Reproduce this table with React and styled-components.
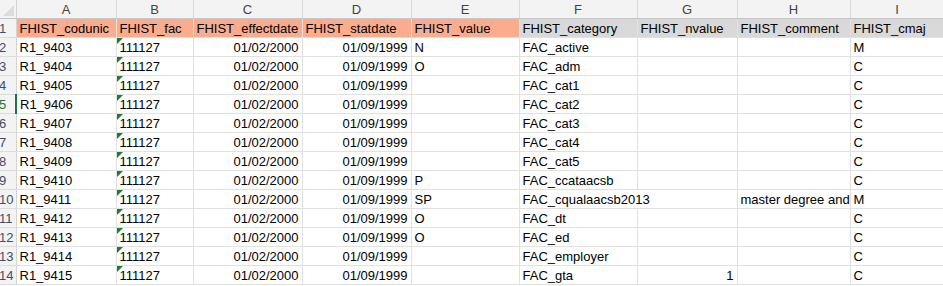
import React from "react";
import styled, { createGlobalStyle } from "styled-components";

const GlobalStyle = createGlobalStyle`
  html, body {
    margin: 0;
    padding: 0;
    background: #ffffff;
    overflow: hidden;
  }
  body {
    font-family: "Liberation Sans", Arial, sans-serif;
  }
`;

// row header, then columns A..I
const widths = [16, 100, 77, 109, 109, 108, 118, 100, 113, 94];
const letters = ["A", "B", "C", "D", "E", "F", "G", "H", "I"];

const Sheet = styled.table`
  border-collapse: collapse;
  table-layout: fixed;
  width: ${widths.reduce((a, b) => a + b, 0)}px;
  font-size: 13px;
  color: #000;

  td, th {
    padding: 0;
    height: 18px;
    white-space: nowrap;
    overflow: hidden;
  }
`;

const Column = styled.col`
  width: ${p => p.$w}px;
`;

const Corner = styled.th`
  position: relative;
  background: #f3f3f3;
  border-right: 1px solid #d4d4d4;
  border-bottom: 1px solid #c6c6c6;

  &::after {
    content: "";
    position: absolute;
    right: 2px;
    bottom: 2px;
    width: 0;
    height: 0;
    border-left: 11px solid transparent;
    border-bottom: 11px solid #dcdcdc;
  }
`;

const ColHead = styled.th`
  background: #f3f3f3;
  color: #444;
  font-weight: normal;
  font-size: 13px;
  text-align: center;
  border-right: 1px solid #d9d9d9;
  border-bottom: 1px solid #c6c6c6;
  vertical-align: middle;
`;

const RowHead = styled.td`
  background: #f3f3f3;
  color: ${p => (p.$active ? "#217346" : "#3f4d63")};
  text-indent: -1px;
  text-align: left;
  border-right: ${p => (p.$active ? "2px solid #217346" : "1px solid #d4d4d4")};
  border-bottom: 1px solid #dcdcdc;
  vertical-align: bottom;
  line-height: 17px;
`;

const Cell = styled.td`
  position: relative;
  background: ${p => p.$fill || "#ffffff"};
  text-align: ${p => (p.$right ? "right" : "left")};
  padding: 0 3px !important;
  border-right: 1px solid #e1e1e1;
  border-bottom: 1px solid #e1e1e1;
  vertical-align: bottom;
  line-height: 17px;
  text-overflow: clip;

  ${p =>
    p.$flag &&
    `
    &::before {
      content: "";
      position: absolute;
      left: 0;
      top: 0;
      width: 0;
      height: 0;
      border-top: 6px solid #1e7b34;
      border-right: 6px solid transparent;
    }
  `}
`;

const headers = [
  ["FHIST_codunic", "#fbac8f"],
  ["FHIST_fac", "#fbac8f"],
  ["FHIST_effectdate", "#fbac8f"],
  ["FHIST_statdate", "#fbac8f"],
  ["FHIST_value", "#fbac8f"],
  ["FHIST_category", "#d9d9d9"],
  ["FHIST_nvalue", "#d9d9d9"],
  ["FHIST_comment", "#d9d9d9"],
  ["FHIST_cmaj", "#d9d9d9"],
];

const rows = [
  { code: "R1_9403", value: "N", cat: "FAC_active", cmaj: "M" },
  { code: "R1_9404", value: "O", cat: "FAC_adm", cmaj: "C" },
  { code: "R1_9405", value: "", cat: "FAC_cat1", cmaj: "C" },
  { code: "R1_9406", value: "", cat: "FAC_cat2", cmaj: "C" },
  { code: "R1_9407", value: "", cat: "FAC_cat3", cmaj: "C" },
  { code: "R1_9408", value: "", cat: "FAC_cat4", cmaj: "C" },
  { code: "R1_9409", value: "", cat: "FAC_cat5", cmaj: "C" },
  { code: "R1_9410", value: "P", cat: "FAC_ccataacsb", cmaj: "C" },
  { code: "R1_9411", value: "SP", cat: "FAC_cqualaacsb2013", comment: "master degree and", cmaj: "M", wide: true },
  { code: "R1_9412", value: "O", cat: "FAC_dt", cmaj: "C" },
  { code: "R1_9413", value: "O", cat: "FAC_ed", cmaj: "C" },
  { code: "R1_9414", value: "", cat: "FAC_employer", cmaj: "C" },
  { code: "R1_9415", value: "", cat: "FAC_gta", nvalue: "1", cmaj: "C" },
];

export default function App() {
  return (
    <>
      <GlobalStyle />
      <Sheet>
        <colgroup>
          {widths.map((w, i) => (
            <Column key={i} $w={w} />
          ))}
        </colgroup>
        <thead>
          <tr>
            <Corner />
            {letters.map(l => (
              <ColHead key={l}>{l}</ColHead>
            ))}
          </tr>
        </thead>
        <tbody>
          <tr>
            <RowHead>1</RowHead>
            {headers.map(([t, c]) => (
              <Cell key={t} $fill={c}>{t}</Cell>
            ))}
          </tr>
          {rows.map((r, i) => (
            <tr key={r.code}>
              <RowHead $active={i + 2 === 5}>{i + 2}</RowHead>
              <Cell>{r.code}</Cell>
              <Cell $flag>111127</Cell>
              <Cell $right>01/02/2000</Cell>
              <Cell $right>01/09/1999</Cell>
              <Cell>{r.value}</Cell>
              {r.wide ? (
                <Cell colSpan={2}>{r.cat}</Cell>
              ) : (
                <>
                  <Cell>{r.cat}</Cell>
                  <Cell $right>{r.nvalue || ""}</Cell>
                </>
              )}
              <Cell>{r.comment || ""}</Cell>
              <Cell>{r.cmaj}</Cell>
            </tr>
          ))}
        </tbody>
      </Sheet>
    </>
  );
}
